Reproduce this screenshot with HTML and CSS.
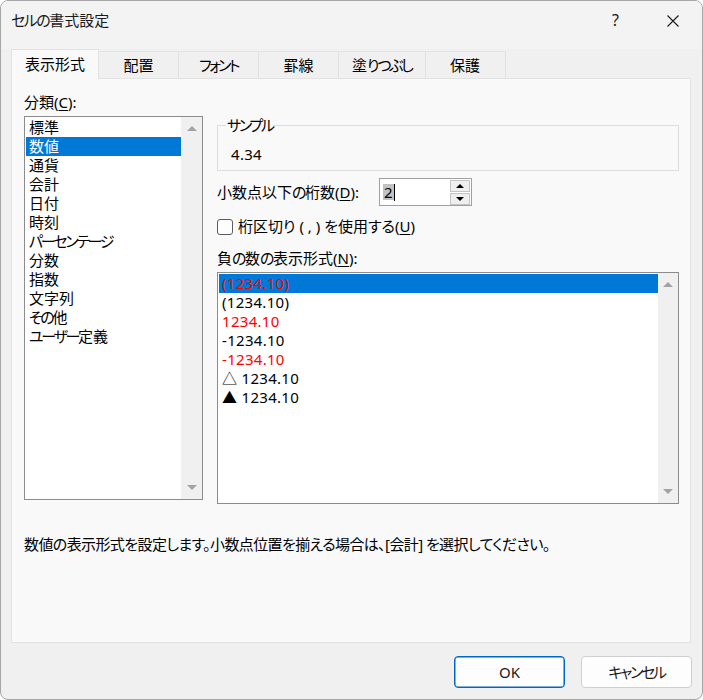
FILE: index.html
```html
<!DOCTYPE html>
<html lang="ja">
<head>
<meta charset="utf-8">
<title>セルの書式設定</title>
<link rel="stylesheet" href="styles.css">
</head>
<body>
<div class="window">
  <div class="titlebar">
    <div class="title"><span class="kn1">セルの</span>書式設定</div>
    <div class="tb-btn help">?</div>
    <div class="tb-btn close">
      <svg width="12" height="12" viewBox="0 0 12 12"><path d="M0.5 0.5 L11.5 11.5 M11.5 0.5 L0.5 11.5" stroke="#1a1a1a" stroke-width="1.1" fill="none"/></svg>
    </div>
  </div>
  <div class="tabs">
    <div class="tab active">表示形式</div>
    <div class="tab">配置</div>
    <div class="tab"><span class="kn3">フォント</span></div>
    <div class="tab">罫線</div>
    <div class="tab">塗<span class="kn">りつぶし</span></div>
    <div class="tab">保護</div>
  </div>
  <div class="panel">
    <div class="columns">
      <div class="col-left">
        <div class="label">分類(<u>C</u>):</div>
        <div class="listbox cat-list">
          <div class="items">
            <div class="item">標準</div>
            <div class="item selected">数値</div>
            <div class="item">通貨</div>
            <div class="item">会計</div>
            <div class="item">日付</div>
            <div class="item">時刻</div>
            <div class="item"><span class="kn">パーセンテージ</span></div>
            <div class="item">分数</div>
            <div class="item">指数</div>
            <div class="item">文字列</div>
            <div class="item"><span class="kn">その</span>他</div>
            <div class="item"><span class="kn">ユーザー</span>定義</div>
          </div>
          <div class="scrollbar">
            <span class="arrow up"></span>
            <span class="arrow down"></span>
          </div>
        </div>
      </div>
      <div class="col-right">
        <fieldset class="sample">
          <legend><span class="kn">サンプル</span></legend>
          <div class="sample-value">4.34</div>
        </fieldset>
        <div class="decimals-row">
          <div class="decimals-label">小数点以下<span class="kn1">の</span>桁数(<u>D</u>):</div>
          <div class="spinbox">
            <div class="spin-text"><span class="sel">2</span><span class="caret"></span></div>
            <div class="spin-btns">
              <div class="spin-btn"><span class="tri-up"></span></div>
              <div class="spin-btn"><span class="tri-down"></span></div>
            </div>
          </div>
        </div>
        <div class="check-row">
          <span class="checkbox"></span>
          <span class="check-label">桁区切り ( , ) を使用する(<u>U</u>)</span>
        </div>
        <div class="label neg-label">負<span class="kn1">の</span>数<span class="kn1">の</span>表示形式(<u>N</u>):</div>
        <div class="listbox neg-list">
          <div class="items">
            <div class="item num selected red">(1234.10)</div>
            <div class="item num">(1234.10)</div>
            <div class="item num red">1234.10</div>
            <div class="item num">-1234.10</div>
            <div class="item num red">-1234.10</div>
            <div class="item num">△ 1234.10</div>
            <div class="item num">▲ 1234.10</div>
          </div>
          <div class="scrollbar">
            <span class="arrow up"></span>
            <span class="arrow down"></span>
          </div>
        </div>
      </div>
    </div>
    <div class="description">数値の表示形式を設定します。小数点位置を揃える場合は、[会計] を選択してください。</div>
  </div>
  <div class="footer">
    <button class="btn primary">OK</button>
    <button class="btn"><span class="kn">キャンセル</span></button>
  </div>
</div>
</body>
</html>
```
FILE: styles.css
```css
* { box-sizing: border-box; }
html, body { margin: 0; padding: 0; background: #ffffff; }
body {
  font-family: "Noto Sans", "Noto Sans CJK JP", sans-serif;
  font-size: 15px;
  color: #000;
  font-feature-settings: "palt";
}
u { text-underline-offset: 2px; text-decoration-thickness: 1px; }
.kn { letter-spacing: -2.3px; }
.kn1 { letter-spacing: -1.5px; }
.kn3 { letter-spacing: -2.6px; }

.window {
  width: 703px;
  height: 700px;
  background: #f0f0f0;
  border: 1px solid #a6a6a6;
  border-radius: 8px;
  display: flex;
  flex-direction: column;
  overflow: hidden;
}

.titlebar {
  height: 48px;
  display: flex;
  align-items: flex-start;
  padding-top: 10px;
  background: #f3f3f3;
}
.title {
  flex: 1;
  padding-left: 10px;
  line-height: 19px;
  color: #1a1a1a;
}
.tb-btn {
  width: 57px;
  height: 19px;
  display: flex;
  align-items: center;
  justify-content: center;
  line-height: 19px;
  color: #1a1a1a;
}
.tb-btn.help { font-size: 16px; }
.tb-btn.close { margin-right: 1px; }

.tabs {
  height: 30px;
  display: flex;
  align-items: flex-start;
  padding-left: 10px;
}
.tab {
  height: 30px;
  margin-top: 2px;
  min-width: 80px;
  padding: 0 13px 2px;
  background: #f0f0f0;
  border-top: 1px solid #e2e2e2;
  border-right: 1px solid #e2e2e2;
  display: flex;
  align-items: center;
  justify-content: center;
  line-height: 19px;
  color: #000;
}
.tab.active {
  position: relative;
  z-index: 1;
  margin-top: 0;
  height: 30px;
  width: 88px;
  background: #f9f9f9;
  border-left: 1px solid #e2e2e2;
  padding-bottom: 0;
}

.panel {
  margin: -1px 11px 0 10px;
  height: 565px;
  background: #f9f9f9;
  border: 1px solid #e2e2e2;
  padding: 14px 0 0 12px;
}

.columns {
  display: grid;
  grid-template-columns: 179px 462px;
  column-gap: 14px;
  align-items: start;
}

.label { line-height: 19px; height: 19px; }

.listbox {
  margin-top: 4px;
  background: #fff;
  border: 1px solid #8c8c8c;
  display: flex;
  padding: 1px 0 0 1px;
}
.cat-list { height: 384px; }
.neg-list { height: 232px; margin-top: 4px; }
.items { flex: 1; }
.item {
  height: 19px;
  line-height: 19px;
  padding-left: 3px;
  white-space: nowrap;
}
.item.selected { background: #0078d7; color: #fff; }
.item.red { color: #ff0000; }
.item.num { letter-spacing: 0.3px; }

.scrollbar {
  width: 21px;
  margin-top: -1px;
  background: #f0f0f0;
  display: flex;
  flex-direction: column;
  justify-content: space-between;
  align-items: center;
  padding: 9px 0 9px;
}
.neg-list .scrollbar { width: 20px; }
.arrow { width: 0; height: 0; border-left: 5px solid transparent; border-right: 5px solid transparent; }
.arrow.up { border-bottom: 5px solid #a3a3a3; }
.arrow.down { border-top: 5px solid #a3a3a3; }

.col-right { margin-top: 23px; }

.sample {
  margin: 0;
  width: 462px;
  border: 1px solid #dcdcdc;
  padding: 10px 12px 6px 13px;
  min-width: 0;
}
.sample legend {
  padding: 0 1px;
  margin-left: -5px;
  line-height: 19px;
}
.sample-value { line-height: 19px; letter-spacing: 0.3px; }

.decimals-row {
  margin-top: 7px;
  display: flex;
  align-items: center;
  height: 28px;
}
.decimals-label { width: 162px; line-height: 19px; }
.spinbox {
  width: 93px;
  height: 28px;
  border: 1px solid #a0a0a0;
  background: #fff;
  display: flex;
  align-items: center;
  padding-left: 3px;
}
.spin-text {
  flex: 1;
  display: flex;
  align-items: center;
  height: 16px;
}
.sel {
  background: #c2c2c2;
  line-height: 16px;
  height: 16px;
  padding: 0 1px;
}
.caret { width: 1px; height: 17px; background: #000; }
.spin-btns {
  width: 20px;
  margin-right: 1px;
  display: flex;
  flex-direction: column;
  gap: 1px;
}
.spin-btn {
  height: 12px;
  border: 1px solid #c4c4c4;
  background: #efefef;
  display: flex;
  align-items: center;
  justify-content: center;
}
.tri-up { width: 0; height: 0; border-left: 4px solid transparent; border-right: 4px solid transparent; border-bottom: 4px solid #000; }
.tri-down { width: 0; height: 0; border-left: 4px solid transparent; border-right: 4px solid transparent; border-top: 4px solid #000; }

.check-row {
  margin-top: 11px;
  display: flex;
  align-items: center;
  height: 19px;
}
.checkbox {
  width: 16px;
  height: 16px;
  border: 1px solid #5c5c5c;
  border-radius: 3px;
  background: #fdfdfd;
}
.check-label { margin-left: 5px; line-height: 19px; }

.neg-label { margin-top: 13px; }

.description {
  margin-top: 31px;
  line-height: 19px;
  white-space: nowrap;
  letter-spacing: -0.6px;
}

.footer {
  flex: 1;
  display: flex;
  justify-content: flex-end;
  align-items: flex-start;
  padding: 13px 10px 0 0;
  gap: 16px;
}
.btn {
  width: 111px;
  height: 32px;
  font: inherit;
  font-size: 15px;
  color: #1a1a1a;
  background: #fdfdfd;
  border: 1px solid #d0d0d0;
  border-radius: 4px;
  padding: 0;
  line-height: 19px;
}
.btn.primary { border-color: #0067c0; box-shadow: inset 0 0 0 0.5px #0067c0; }
```
